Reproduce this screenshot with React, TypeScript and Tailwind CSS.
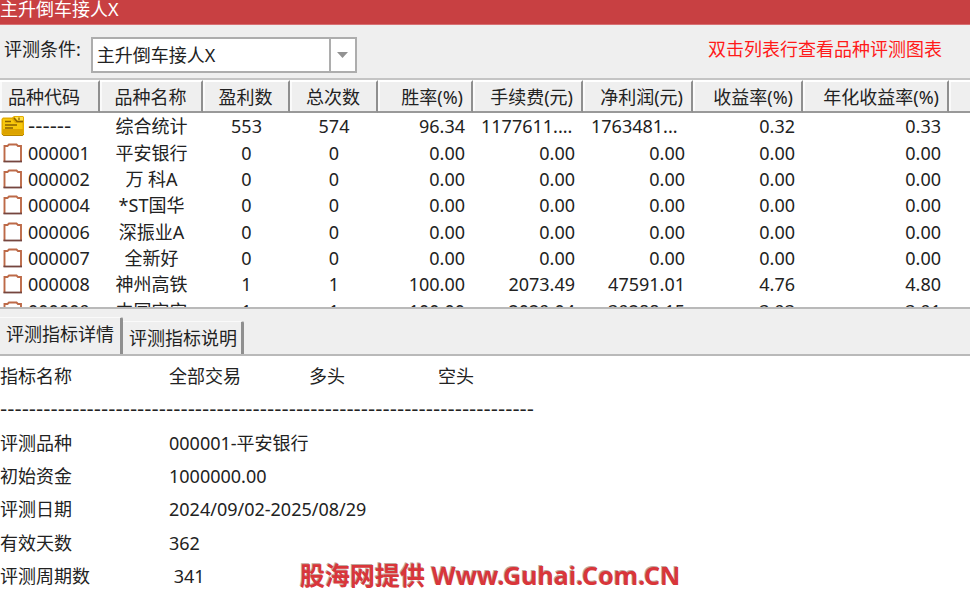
import React, { useState } from 'react';

const COLUMNS = [
  { label: "品种代码", width: "w-[100px]", align: "text-left pl-2" },
  { label: "品种名称", width: "w-[103px]", align: "text-center" },
  { label: "盈利数", width: "w-[87px]", align: "text-center" },
  { label: "总次数", width: "w-[88px]", align: "text-center" },
  { label: "胜率(%)", width: "w-[95px]", align: "text-right pr-2" },
  { label: "手续费(元)", width: "w-[110px]", align: "text-right pr-2" },
  { label: "净利润(元)", width: "w-[110px]", align: "text-right pr-2" },
  { label: "收益率(%)", width: "w-[110px]", align: "text-right pr-2" },
  { label: "年化收益率(%)", width: "w-[146px]", align: "text-right pr-2" }
];

const ROWS = [
  ["------", "综合统计", "553", "574", "96.34", "1177611....", "1763481...", "0.32", "0.33"],
  ["000001", "平安银行", "0", "0", "0.00", "0.00", "0.00", "0.00", "0.00"],
  ["000002", "万 科A", "0", "0", "0.00", "0.00", "0.00", "0.00", "0.00"],
  ["000004", "*ST国华", "0", "0", "0.00", "0.00", "0.00", "0.00", "0.00"],
  ["000006", "深振业A", "0", "0", "0.00", "0.00", "0.00", "0.00", "0.00"],
  ["000007", "全新好", "0", "0", "0.00", "0.00", "0.00", "0.00", "0.00"],
  ["000008", "神州高铁", "1", "1", "100.00", "2073.49", "47591.01", "4.76", "4.80"],
  ["000009", "中国宝安", "1", "1", "100.00", "2029.04", "39288.15", "3.93", "3.91"]
];

const TABS = [
  { label: "评测指标详情", style: "h-[37px] pb-1 pl-1.5 pr-1.5" },
  { label: "评测指标说明", style: "h-[33px] pl-1.5 pr-1" }
];

const DETAILS = [
  { name: "评测品种", value: "000001-平安银行" },
  { name: "初始资金", value: "1000000.00" },
  { name: "评测日期", value: "2024/09/02-2025/08/29" },
  { name: "有效天数", value: "362" },
  { name: "评测周期数", value: "\u00a0341" }
];

function SummaryIcon() {
  return (
    <svg width="24" height="22" viewBox="0 0 24 22" className="shrink-0" aria-hidden="true">
      <path d="M3 2.5 H12 L14 1 H23 L24.5 2.5 V19 L22.5 21 H3.5 L1.5 19 V4 Z" fill="#e3ac00" />
      <path d="M3 4 H12 L15 8 H22.5 V14 H3 Z" fill="#f8c80c" />
      <path d="M3 14 H23 V19 H3 Z" fill="#dca300" />
      <path d="M14.5 2 H23 V5.5 H17.5 Z" fill="#ffe14a" />
      <path d="M5 6.5 H11 M5 10 H17 M5 13 H13 M14 3 L17 6.5 H23 M19 2.5 V5" stroke="#8a6100" strokeWidth="1.3" fill="none" />
      <path d="M2 19 L3.5 20.5 H22.5 L24 19" stroke="#b58300" fill="none" />
    </svg>
  );
}

function StockIcon() {
  return (
    <svg width="24" height="22" viewBox="0 0 24 22" className="shrink-0" aria-hidden="true">
      <path d="M4.5 20 V4 H7.5 L9 2.5 H16.5 L18 4 H21 V20" fill="#fff" stroke="#bd6a48" strokeWidth="1.9" />
      <path d="M3.5 19.5 H22" stroke="#75463f" strokeWidth="1.8" />
    </svg>
  );
}

export default function App() {
  const [activeTab, setActiveTab] = useState(0);

  return (
    <div className="flex h-screen min-h-[593px] flex-col overflow-hidden bg-white font-['Noto_Sans','Noto_Sans_CJK_SC',sans-serif] text-lg leading-6 text-[#222]">
      <header className="h-[25px] shrink-0 border-b border-[#d87073] bg-[#c84042] text-white">
        <h1 className="leading-[18px]">主升倒车接人X</h1>
      </header>

      {/* Toolbar */}
      <div className="flex h-[53px] shrink-0 items-start justify-between bg-[#efefef] pt-3 pr-7 pl-1">
        <div className="flex items-start gap-2.5">
          <label htmlFor="condition">评测条件:</label>
          <div className="relative">
            <select
              id="condition"
              className="block h-9 w-[266px] appearance-none border-2 border-[#adadad] bg-white pl-1"
            >
              <option>主升倒车接人X</option>
            </select>
            <span className="pointer-events-none absolute top-0 right-0 flex h-9 w-7 items-center justify-center border-2 border-[#adadad]">
              <svg width="11" height="6" viewBox="0 0 11 6" aria-hidden="true">
                <path d="M0 0 H11 L5.5 6 Z" fill="#929292" />
              </svg>
            </span>
          </div>
        </div>
        <p className="text-[#ff1a1a]">双击列表行查看品种评测图表</p>
      </div>

      {/* Stock list */}
      <div className="h-[229px] shrink-0 overflow-hidden border-t-2 border-[#c4c4c4]">
        <table className="h-[244px] w-full table-fixed border-separate border-spacing-0">
          <thead>
            <tr className="h-[33px] bg-[#efefef]">
              {COLUMNS.map((col) => (
                <th
                  key={col.label}
                  scope="col"
                  className={`border-t-2 border-r-2 border-b-2 border-t-white border-r-[#8f8f8f] border-b-[#999] py-0 font-normal whitespace-nowrap shadow-[inset_2px_0_0_#fafafa] ${col.width} ${col.align}`}
                >
                  {col.label}
                </th>
              ))}
              <td className="border-t-2 border-b-2 border-t-white border-b-[#999] p-0 shadow-[inset_2px_0_0_#fafafa]"></td>
            </tr>
          </thead>
          <tbody>
            {ROWS.map((row, index) => (
              <tr key={row[0]}>
                <td className="p-0">
                  <div className="flex items-center gap-1">
                    {index === 0 ? <SummaryIcon /> : <StockIcon />}
                    <span className={index === 0 ? "font-['DejaVu_Sans'] text-xl leading-6" : ""}>{row[0]}</span>
                  </div>
                </td>
                {row.slice(1).map((cell, i) => (
                  <td
                    key={i}
                    className={`py-0 whitespace-nowrap ${cell.endsWith('...') ? 'pl-2 text-left' : COLUMNS[i + 1].align}`}
                  >
                    {cell}
                  </td>
                ))}
                <td className="p-0"></td>
              </tr>
            ))}
          </tbody>
        </table>
      </div>

      {/* Tabs */}
      <div role="tablist" className="flex h-[49px] shrink-0 items-end border-y-2 border-[#b9b9b9] bg-[#efefef]">
        {TABS.map((tab, index) => (
          <button
            key={tab.label}
            role="tab"
            aria-selected={index === activeTab}
            onClick={() => setActiveTab(index)}
            className={`rounded-tr-xs border-t border-r-3 border-t-[#fafafa] border-r-[#8f8f8f] whitespace-nowrap ${tab.style}`}
          >
            {tab.label}
          </button>
        ))}
      </div>

      {/* Details */}
      <div className="relative flex flex-1 flex-col pt-[3px]">
        <div className="flex flex-1 items-center">
          <span className="w-[169px]">指标名称</span>
          <span className="w-[140px]">全部交易</span>
          <span className="w-[129px]">多头</span>
          <span>空头</span>
        </div>
        <div className="flex flex-1 items-center font-['DejaVu_Sans'] text-xl leading-6 whitespace-nowrap">
          {"-".repeat(74)}
        </div>
        {DETAILS.map((item) => (
          <div key={item.name} className="flex flex-1 items-center">
            <span className="w-[169px]">{item.name}</span>
            <span>{item.value}</span>
          </div>
        ))}
        <p className="absolute bottom-0.5 left-[300px] text-[25px] leading-8 font-bold whitespace-nowrap text-[#d9363a] [text-shadow:-1px_-1px_0_#c0a8a0]">
          股海网提供 Www.Guhai.Com.CN
        </p>
      </div>
    </div>
  );
}
